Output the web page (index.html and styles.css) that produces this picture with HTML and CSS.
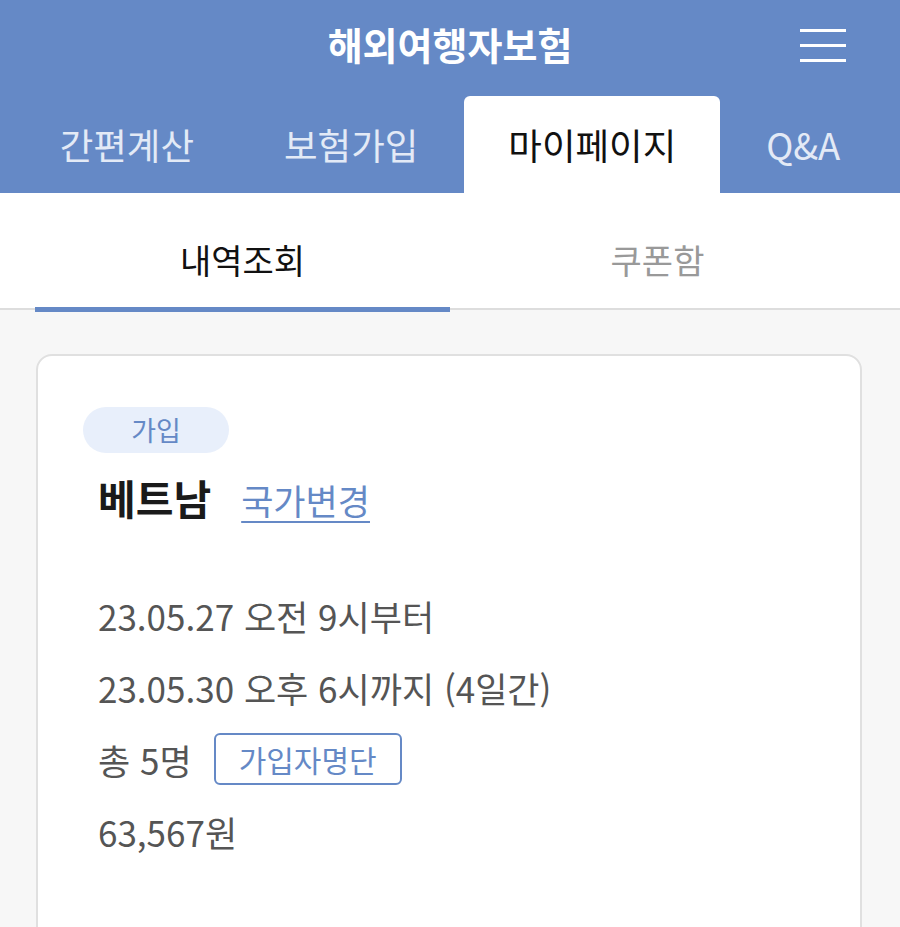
FILE: index.html
```html
<!DOCTYPE html>
<html lang="ko">
<head>
    <meta charset="UTF-8">
    <meta name="viewport" content="width=device-width, initial-scale=1.0">
    <title>해외여행자보험</title>
    <link rel="stylesheet" href="styles.css">
</head>
<body>
    <header class="header">
        <div class="title-row">
            <h1 class="title">해외여행자보험</h1>
            <button class="menu-btn" type="button" aria-label="메뉴">
                <span></span><span></span><span></span>
            </button>
        </div>
        <nav class="main-tabs">
            <a class="main-tab" href="#">간편계산</a>
            <a class="main-tab" href="#">보험가입</a>
            <a class="main-tab active" href="#">마이페이지</a>
            <a class="main-tab" href="#">Q&amp;A</a>
        </nav>
    </header>

    <div class="sub-tabs">
        <a class="sub-tab active" href="#">내역조회</a>
        <a class="sub-tab" href="#">쿠폰함</a>
    </div>

    <main class="content">
        <div class="card">
            <span class="badge">가입</span>
            <div class="country-row">
                <span class="country">베트남</span>
                <a class="change-link" href="#">국가변경</a>
            </div>
            <div class="details">
                <p class="line">23.05.27 오전 9시부터</p>
                <p class="line">23.05.30 오후 6시까지 (4일간)</p>
                <p class="line">총 5명 <button class="list-btn" type="button">가입자명단</button></p>
                <p class="line">63,567원</p>
            </div>
        </div>
    </main>
</body>
</html>
```

FILE: styles.css
```css
body {
    margin: 0;
    font-family: "Noto Sans CJK KR", "Noto Sans", sans-serif;
    background-color: #f7f7f7;
    color: #222;
    overflow: hidden;
}

a {
    text-decoration: none;
}

.header {
    background-color: #6589c6;
}

.title-row {
    height: 86px;
    padding-bottom: 10px;
    display: flex;
    align-items: center;
    justify-content: center;
    position: relative;
}

.title {
    margin: 0;
    font-size: 38px;
    font-weight: bold;
    color: #fff;
}

.menu-btn {
    position: absolute;
    right: 54px;
    top: 29px;
    width: 46px;
    height: 33px;
    padding: 0;
    border: none;
    background: none;
    display: flex;
    flex-direction: column;
    justify-content: space-between;
    cursor: pointer;
}

.menu-btn span {
    display: block;
    height: 3px;
    background-color: #fff;
}

.main-tabs {
    display: flex;
    justify-content: center;
    gap: 2px;
    height: 97px;
}

.main-tab {
    display: flex;
    align-items: center;
    padding: 0 44px;
    font-size: 36.5px;
    color: #e3eaf6;
    border-radius: 6px 6px 0 0;
}

.main-tab.active {
    background-color: #fff;
    color: #111;
}

.sub-tabs {
    display: flex;
    padding: 0 35px;
    background-color: #fff;
    border-bottom: 2px solid #dddddd;
}

.sub-tab {
    flex: 1;
    height: 119px;
    padding-top: 18px;
    box-sizing: border-box;
    display: flex;
    align-items: center;
    justify-content: center;
    font-size: 34px;
    color: #999;
    margin-bottom: -4px;
    border-bottom: 5px solid transparent;
}

.sub-tab.active {
    color: #111;
    border-bottom-color: #6589c6;
}

.content {
    padding: 44px 38px 0 36px;
}

.card {
    background-color: #fff;
    border: 2px solid #e0e0e0;
    border-radius: 16px;
    padding: 51px 45px 0;
    height: 700px;
}

.badge {
    display: inline-block;
    width: 146px;
    height: 46px;
    line-height: 46px;
    text-align: center;
    border-radius: 23px;
    background-color: #e8effb;
    color: #6589c6;
    font-size: 27px;
}

.country-row {
    display: flex;
    align-items: baseline;
    gap: 30px;
    padding-left: 15px;
    margin-top: 14px;
}

.country {
    font-size: 41px;
    font-weight: bold;
    color: #1a1a1a;
}

.change-link {
    font-size: 35px;
    color: #6589c6;
    text-decoration: underline;
    text-underline-offset: 6px;
    text-decoration-thickness: 2px;
}

.details {
    padding-left: 15px;
    margin-top: 52px;
}

.line {
    margin: 0;
    height: 72px;
    display: flex;
    align-items: center;
    font-size: 35px;
    color: #555;
}

.list-btn {
    margin-left: 22px;
    height: 52px;
    padding: 0 23px;
    border: 2px solid #6589c6;
    border-radius: 6px;
    background-color: #fff;
    color: #6589c6;
    font-family: "Noto Sans CJK KR", sans-serif;
    font-size: 30px;
    cursor: pointer;
}
```
